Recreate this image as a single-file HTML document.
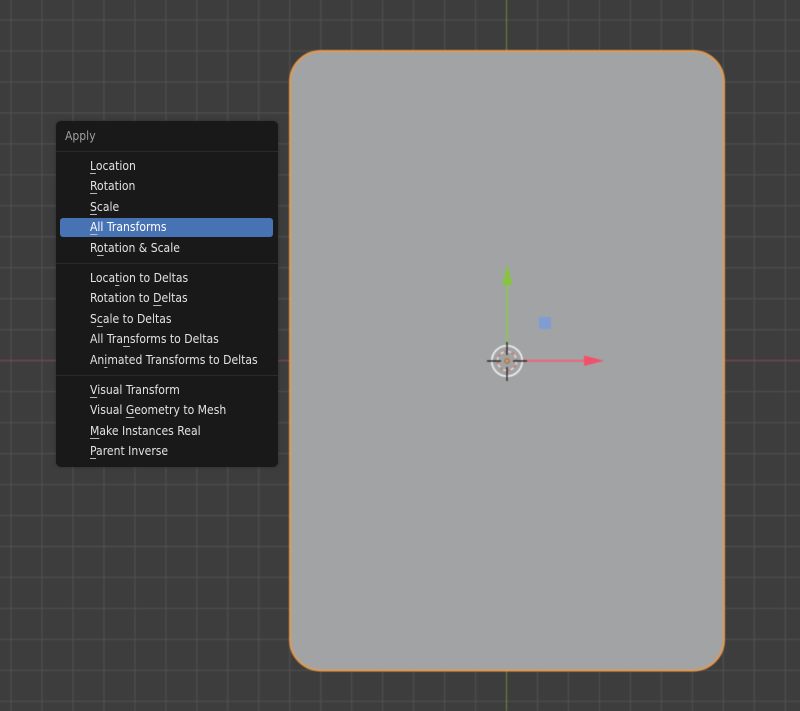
<!DOCTYPE html>
<html><head><meta charset="utf-8"><style>
html,body{margin:0;padding:0;width:800px;height:711px;overflow:hidden;background:#3d3d3d}
svg.bg{position:absolute;left:0;top:0;filter:blur(.45px)}
#m{position:absolute;left:56px;top:121px;width:221.5px;height:345.5px;background:#191919;border-radius:5px;box-shadow:0 0 3px rgba(0,0,0,.3)}
.t{position:absolute;left:34px;font:12.4px/16px "DejaVu Sans",sans-serif;color:#e2e2e2;white-space:nowrap;height:16px;transform:scaleX(.875);transform-origin:0 50%;filter:blur(.2px)}
.t u{text-decoration:underline;text-decoration-thickness:1px;text-underline-offset:2.5px;text-decoration-color:#b8b8b8}
.s{position:absolute;left:0;width:221.5px;height:1px;background:#2a2a2a}
#h{position:absolute;left:4px;top:97px;width:213px;height:19px;background:#4772b3;border-radius:3px}
</style></head><body>
<svg class="bg" width="800" height="711" viewBox="0 0 800 711" xmlns="http://www.w3.org/2000/svg">
<defs>
<pattern id="g" x="10.5" y="19.5" width="30.97" height="30.97" patternUnits="userSpaceOnUse">
<path d="M.5 0V31M0 .5H31" stroke="#515151" stroke-width="1" fill="none"/>
</pattern>
</defs>
<rect width="800" height="711" fill="#3d3d3d"/>
<rect width="800" height="711" fill="url(#g)"/>
<path d="M0 360.5H800" stroke="#8a4553" stroke-width="1"/>
<path d="M506.5 0V711" stroke="#6c8a3c" stroke-width="1"/>
<rect x="290" y="51" width="434" height="619.5" rx="31" fill="#a2a3a5" stroke="#e59a4c" stroke-width="2"/>
<path d="M507.2 346V282" stroke="#94c060" stroke-width="2"/>
<path d="M507.3 264L512.5 285H502Z" fill="#86c440"/>
<path d="M523 360.8H586" stroke="#ec6577" stroke-width="2"/>
<path d="M604 360.8L584 355.5V366Z" fill="#f2506a"/>
<rect x="539" y="317" width="12" height="12" rx="1" fill="#7f9dd2"/>
<circle cx="507" cy="361" r="15.2" fill="none" stroke="#f2f2f2" stroke-width="1.6"/>
<circle cx="507" cy="361" r="9.5" fill="none" stroke="#e8e8e8" stroke-width="1.3" stroke-dasharray="4 3.5"/>
<circle cx="507" cy="361" r="9.5" fill="none" stroke="#d9705e" stroke-width="1.3" stroke-dasharray="3.5 4" stroke-dashoffset="3.7"/>
<path d="M487 361H501M513 361H527M507 342V355M507 367V381" stroke="#141414" stroke-width="1.2"/>
<circle cx="507" cy="361" r="2.2" fill="#c9a078" stroke="#b3621e" stroke-width="1"/>
</svg>
<div id="m">
<div class="t" style="left:9px;top:7px;color:#a0a0a0">Apply</div>
<div class="s" style="top:30px"></div>
<div class="t" style="top:37px"><u>L</u>ocation</div>
<div class="t" style="top:57px"><u>R</u>otation</div>
<div class="t" style="top:78px"><u>S</u>cale</div>
<div id="h"></div>
<div class="t" style="top:98px;color:#fff"><u>A</u>ll Transforms</div>
<div class="t" style="top:119px">R<u>o</u>tation &amp; Scale</div>
<div class="s" style="top:142px"></div>
<div class="t" style="top:149px">Loca<u>t</u>ion to Deltas</div>
<div class="t" style="top:169px">Rotation to <u>D</u>eltas</div>
<div class="t" style="top:190px">S<u>c</u>ale to Deltas</div>
<div class="t" style="top:210px">All Tra<u>n</u>sforms to Deltas</div>
<div class="t" style="top:231px">An<u>i</u>mated Transforms to Deltas</div>
<div class="s" style="top:254px"></div>
<div class="t" style="top:261px"><u>V</u>isual Transform</div>
<div class="t" style="top:281px">Visual <u>G</u>eometry to Mesh</div>
<div class="t" style="top:302px"><u>M</u>ake Instances Real</div>
<div class="t" style="top:322px"><u>P</u>arent Inverse</div>
</div>
</body></html>
